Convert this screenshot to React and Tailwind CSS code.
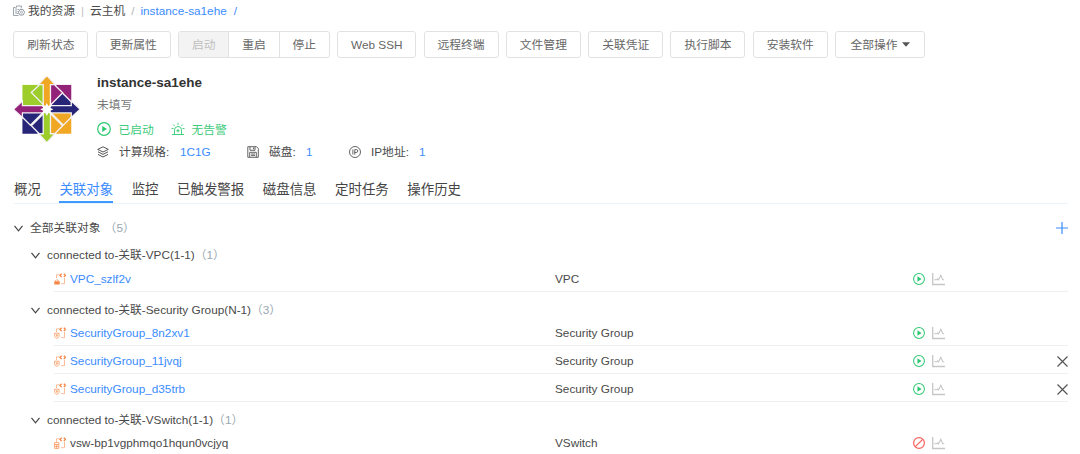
import clsx from "clsx";

const actions = [
    { label: "刷新状态", width: "w-[75px]" },
    { label: "更新属性", width: "w-[75px]" },
    { group: ["启动", "重启", "停止"] },
    { label: "Web SSH", width: "w-[79px]" },
    { label: "远程终端", width: "w-[75px]" },
    { label: "文件管理", width: "w-[75px]" },
    { label: "关联凭证", width: "w-[75px]" },
    { label: "执行脚本", width: "w-[75px]" },
    { label: "安装软件", width: "w-[75px]" },
    { label: "全部操作", width: "w-[90px]", menu: true },
];

const tabs = ["概况", "关联对象", "监控", "已触发警报", "磁盘信息", "定时任务", "操作历史"];

const groups = [
    {
        name: "connected to-关联-VPC(1-1)",
        items: [{ name: "VPC_szlf2v", type: "VPC", kind: "vpc", running: true }],
    },
    {
        name: "connected to-关联-Security Group(N-1)",
        items: [
            { name: "SecurityGroup_8n2xv1", type: "Security Group", kind: "sg", running: true },
            { name: "SecurityGroup_11jvqj", type: "Security Group", kind: "sg", running: true, removable: true },
            { name: "SecurityGroup_d35trb", type: "Security Group", kind: "sg", running: true, removable: true },
        ],
    },
    {
        name: "connected to-关联-VSwitch(1-1)",
        items: [{ name: "vsw-bp1vgphmqo1hqun0vcjyq", type: "VSwitch", kind: "vsw", running: false }],
    },
];

function CentosLogo() {
    return (
        <svg className="size-[66px] shrink-0" viewBox="12 10 199 200">
            <path d="M37 37h65v65H37z" fill="#9ccd2a" />
            <path d="M120 37h65v65h-65z" fill="#932279" />
            <path d="M37 120h65v65H37z" fill="#262577" />
            <path d="M120 120h65v65h-65z" fill="#efa724" />
            {/* the right arrow reaches into the upper right square */}
            <path d="M159 63l27 26v15h-66z" fill="#262577" />
            <g fill="none" stroke="#f4f1f5" strokeWidth="4">
                <path d="M88 37L64 60l42 42M135 37l24 24-42 42" />
                <path d="M185 88l-26-26" />
                <path d="M37 135l24 24 42-42M88 185l-24-24 42-42" />
                <path d="M185 135l-24 24-42-42M135 185l24-24-42-42" />
            </g>
            <g stroke="#f4f1f5" strokeWidth="4">
                <path d="M111 9l25 27h-14v62l-11 13-11-13V36H86z" fill="#efa724" />
                <path d="M212 111l-27 25v-14h-61l-13-11 13-11h61V86z" fill="#262577" />
                <path d="M111 212l-25-27h14v-61l11-13 11 13v61h14z" fill="#9ccd2a" />
                <path d="M10 111l27-25v14h61l13 11-13 11H37v14z" fill="#932279" />
            </g>
            <path d="M111 92l5 10 10-5-4 10 9 4-9 4 4 10-10-4-5 10-5-10-10 4 4-10-9-4 9-4-4-10 10 5z" fill="#fff" />
        </svg>
    );
}

function ResourceIcon() {
    return (
        <svg className="size-[12px]" viewBox="0 0 12 12" fill="none" stroke="#8f9aa3">
            <path d="M3.5 2.5V1h5v1.5M2.5 2.5h-2v8h5M3 2.5v6.500M8 2.500v1M4.500 4.500h1.500M4.500 6.500h1M4 8.500h1.500" strokeWidth="0.9" />
            <path d="M6.900 4.600h3.200l1.500 2.700-1.500 2.700H6.900L5.400 7.300z" strokeWidth="1" />
            <circle cx="8.500" cy="7.300" r="1" strokeWidth="0.8" />
        </svg>
    );
}

function PlayIcon({ className }) {
    return (
        <svg className={className} viewBox="0 0 14 14">
            <circle cx="7" cy="7" r="6.300" fill="none" stroke="#2fc872" strokeWidth="1.200" />
            <path d="M5.200 3.900L10 7l-4.800 3.100z" fill="#2fc872" />
        </svg>
    );
}

function BanIcon() {
    return (
        <svg className="size-[12px]" viewBox="0 0 12 12" fill="none" stroke="#f5605c" strokeWidth="1.200">
            <circle cx="6" cy="6" r="5.400" />
            <path d="M2.300 9.700l7.400-7.400" />
        </svg>
    );
}

function AlarmIcon() {
    return (
        <svg className="size-[14px]" viewBox="0 0 14 14" fill="none" stroke="#2fc872" strokeWidth="0.900">
            <path d="M1 12.500h12M3.500 12.500V8a3.500 3.500 0 0 1 7 0v4.500M7 .8v2M2.200 2.500l1.500 1.500M11.800 2.500L10.300 4M.5 6.500h2M11.500 6.500h2M7 7v3.500M5.300 8.800h3.400" />
        </svg>
    );
}

function LayersIcon() {
    return (
        <svg className="size-[12px]" viewBox="0 0 12 12" fill="none" stroke="#555" strokeWidth="1" strokeLinejoin="round">
            <path d="M6 .8l5.300 2.600L6 6 .7 3.400zM1 5.800l5 2.600 5-2.600M1 8.400L6 11l5-2.600" />
        </svg>
    );
}

function DiskIcon() {
    return (
        <svg className="size-[12px]" viewBox="0 0 12 12" fill="none" stroke="#555" strokeWidth="0.900">
            <path d="M.8.700h8.700l1.800 1.800v8.800H.8zM3 .8v3.500h5V.8M6.500 1.500v1.800M2.700 11.200V6.300h6.600v4.900M4 8h4M4 9.600h4" />
        </svg>
    );
}

function IpIcon() {
    return (
        <svg className="size-[12px]" viewBox="0 0 12 12" fill="none" stroke="#555" strokeWidth="0.900">
            <circle cx="6" cy="6" r="5.500" />
            <path d="M3.900 3.500v5M5.800 8.700V3.600h1.500a1.450 1.450 0 0 1 0 2.900H5.800" />
        </svg>
    );
}

function NodeIcon({ kind }) {
    return (
        <svg className="size-[12px]" viewBox="0 0 12 12" fill="none" stroke="#f9a06a" strokeWidth="0.900">
            <path d="M2.500 5V1.800h3M10.500 5v5.700H7" stroke="#fbb58c" />
            <path d="M7.700.700L6 2.400l1.700 1.700M9.800.700l1.700 1.700-1.700 1.700" stroke="#f58442" strokeWidth="1.300" />
            {kind === "vpc" && (
                <>
                    <path d="M1 8.300a1.900 1.900 0 0 1 3.700 0" />
                    <path d="M.3 8.300h5.400v3.200H.3z" fill="#f58442" stroke="none" />
                </>
            )}
            {kind === "sg" && (
                <path d="M.6 6.200h4.500v2.600c0 1.400-1.200 2.200-2.250 2.600C1.800 11 .6 10.200.6 8.800zM1.800 8.300h2.100M2.850 7.200v2.700" />
            )}
            {kind === "vsw" && <path d="M.6 5.600h4.200v5.800H.6zM.6 7.500h4.200M.6 9.400h4.200M2.700 7.500v4" />}
        </svg>
    );
}

function TrendIcon() {
    return (
        <svg className="size-[13px]" viewBox="0 0 13 13" fill="none" stroke="#c6c6c6" strokeWidth="1.100">
            <path d="M.7 0v11.500h12.300" strokeWidth="1.300" />
            <path d="M2.200 6.800h2.500l1-1 .8 1.200 2.300-4.700 2 4.500h1.400" />
        </svg>
    );
}

function Chevron() {
    return (
        <svg className="h-[7px] w-[9px] shrink-0" viewBox="0 0 9 7" fill="none" stroke="#444" strokeWidth="1.200">
            <path d="M.5 .8l4 5 4-5" />
        </svg>
    );
}

function CloseIcon() {
    return (
        <svg className="size-[11px]" viewBox="0 0 11 11" fill="none" stroke="#555" strokeWidth="1.200">
            <path d="M.5.500l10 10M10.500.500l-10 10" />
        </svg>
    );
}

function Toolbar() {
    return (
        <div className="mt-[10px] ml-[13.400px] flex h-[27px] gap-[7.300px] text-[#666]">
            {actions.map((a, i) =>
                a.group ? (
                    <div key={i} className="flex w-[152px] overflow-hidden rounded-[3px] border border-[#e2e2e2]">
                        {a.group.map((g, j) => (
                            <button
                                key={g}
                                className={clsx("flex-1", j === 0 ? "bg-[#f3f3f3] text-[#bfbfbf]" : "border-l border-[#e2e2e2]")}
                            >
                                {g}
                            </button>
                        ))}
                    </div>
                ) : (
                    <button
                        key={i}
                        className={clsx("flex items-center justify-center rounded-[3px] border border-[#e2e2e2]", a.width)}
                    >
                        {a.label}
                        {a.menu && (
                            <svg className="ml-1 h-[5px] w-[8px]" viewBox="0 0 8 5">
                                <path d="M0 .3h8L4 4.700z" fill="#555" />
                            </svg>
                        )}
                    </button>
                )
            )}
        </div>
    );
}

function Summary() {
    return (
        <div className="mt-[15px] ml-[14px] flex h-[89px] items-start">
            <div className="mt-[3px]">
                <CentosLogo />
            </div>
            <div className="ml-[17px] pt-px">
                <h1 className="h-[18px] text-[13.500px] leading-[18px] font-bold text-[#333]">instance-sa1ehe</h1>
                <p className="mt-[5px] h-[16px] text-[#777]">未填写</p>
                <div className="mt-[7px] flex h-[18px] items-center text-[#3fcb7c]">
                    <PlayIcon className="size-[14px]" />
                    <span className="ml-[7.500px] w-[52px] pt-px">已启动</span>
                    <AlarmIcon />
                    <span className="ml-[7px] pt-px">无告警</span>
                </div>
                <div className="mt-[5px] flex h-[18px] items-center">
                    <LayersIcon />
                    <span className="ml-[10px] w-[61px]">计算规格:</span>
                    <span className="w-[67px] text-[#3b8cff]">1C1G</span>
                    <DiskIcon />
                    <span className="ml-[10px] w-[37px]">磁盘:</span>
                    <span className="w-[43px] text-[#3b8cff]">1</span>
                    <IpIcon />
                    <span className="ml-[10px] w-[48px]">IP地址:</span>
                    <span className="text-[#3b8cff]">1</span>
                </div>
            </div>
        </div>
    );
}

function ItemRow({ item }) {
    return (
        <div className="mr-[12px] ml-[54px] flex h-[28px] items-center border-b border-[#efefef] pt-[3px]">
            <NodeIcon kind={item.kind} />
            <span className={clsx("ml-[4px] w-[485px]", item.running && "text-[#3b8cff]")}>{item.name}</span>
            <span className="w-[358px]">{item.type}</span>
            {item.running ? <PlayIcon className="size-[12px]" /> : <BanIcon />}
            <span className="ml-[7px]">
                <TrendIcon />
            </span>
            {item.removable && (
                <span className="ml-auto">
                    <CloseIcon />
                </span>
            )}
        </div>
    );
}

export default function App() {
    return (
        <div className="h-[454px] w-[1080px] overflow-hidden bg-white font-['Liberation_Sans','Noto_Sans_CJK_SC',sans-serif] text-[11.780px] leading-[16px] whitespace-nowrap text-[#4a4a4a]">
            <div className="flex h-[21px] items-center pl-[13px]">
                <ResourceIcon />
                <span className="ml-[3px]">我的资源</span>
                <span className="w-[15px] text-center text-[#c4c4c4]">|</span>
                <span>云主机</span>
                <span className="w-[15px] text-center text-[#b5b5b5]">/</span>
                <span className="text-[#3b8cff]">instance-sa1ehe</span>
                <span className="ml-[7px] text-[#3b8cff]">/</span>
            </div>
            <Toolbar />
            <Summary />
            <nav className="mr-[12px] ml-[14px] mt-[14px] flex h-[28px] gap-[18.500px] border-b border-[#eaf3fc] text-[13.450px] leading-[27px] text-[#444]">
                {tabs.map((t, i) => (
                    <div
                        key={t}
                        className={clsx("h-[27px]", i === 1 && "border-b-2 border-[#3d9bff] text-[#3b8cff]")}
                    >
                        {t}
                    </div>
                ))}
            </nav>
            <div className="flex h-[34px] items-center pt-[14px] pr-[12px] pl-[14px]">
                <Chevron />
                <span className="ml-[7px]">全部关联对象</span>
                <span className="ml-[4px] text-[#9aa7b1]">（5）</span>
                <svg className="ml-auto size-[12px]" viewBox="0 0 12 12" stroke="#3b8cff" strokeWidth="1.200">
                    <path d="M6 0v12M0 6h12" />
                </svg>
            </div>
            {groups.map((g, i) => (
                <div key={g.name}>
                    <div className={clsx("flex h-[26px] items-center pl-[31px]", i === 0 ? "pt-[8px]" : "pt-[10px]")}>
                        <Chevron />
                        <span className="ml-[7px]">{g.name}</span>
                        <span className="text-[#9aa7b1]">（{g.items.length}）</span>
                    </div>
                    {g.items.map((item) => (
                        <ItemRow key={item.name} item={item} />
                    ))}
                </div>
            ))}
        </div>
    );
}
